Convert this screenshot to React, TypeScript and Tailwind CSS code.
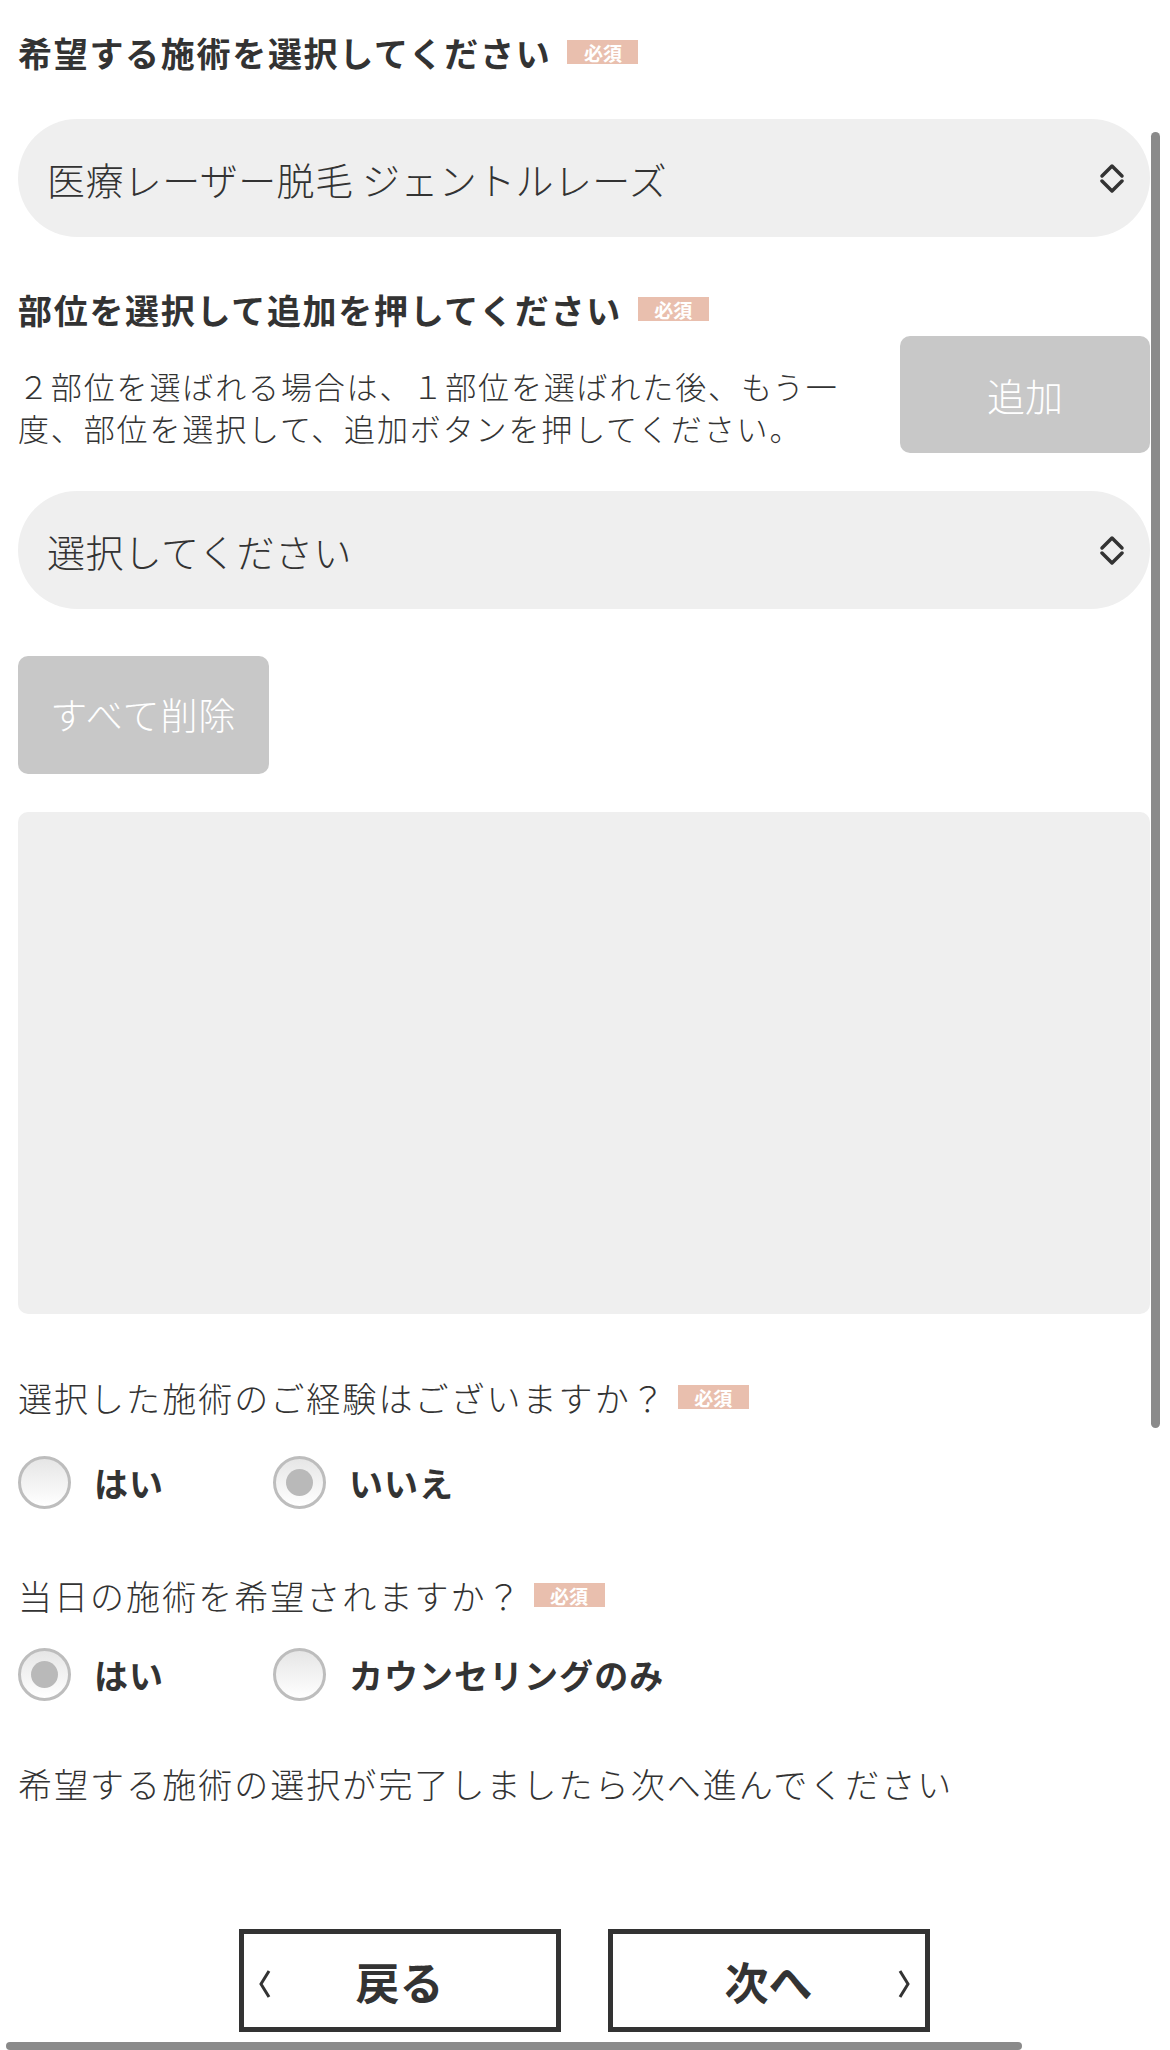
import React from "react"

function Badge({ gap = "ml-[16px]" }: { gap?: string }) {
    return (
        <span className={`${gap} inline-flex h-[24px] w-[71px] items-center justify-center bg-[#e9bfae] text-[19px] font-bold leading-none tracking-normal text-white`}>
            必須
        </span>
    )
}

function UpDown() {
    return (
        <svg width="26" height="30" viewBox="0 0 26 30" fill="none" stroke="#333" strokeWidth="3.5" strokeLinecap="round" strokeLinejoin="round">
            <polyline points="3,13 13,3 23,13" />
            <polyline points="3,18 13,28 23,18" />
        </svg>
    )
}

function SelectBox({ label }: { label: string }) {
    return (
        <div className="flex h-[118px] items-center justify-between rounded-full bg-[#efefef] pl-[29px] pr-[25px]">
            <span className="text-[38px] font-light tracking-[0.01em] text-[#333]">{label}</span>
            <UpDown />
        </div>
    )
}

function Radio({ checked, label }: { checked?: boolean; label: string }) {
    return (
        <label className="flex items-center gap-[23px]">
            <span className="flex h-[53px] w-[53px] items-center justify-center rounded-full border-[3px] border-[#bdbdbd] bg-gradient-to-b from-[#e6e6e6] to-white">
                {checked && <span className="h-[27px] w-[27px] rounded-full bg-[#b9b9b9]" />}
            </span>
            <span className="text-[34px] font-bold tracking-[0.03em] text-[#333]">{label}</span>
        </label>
    )
}

function Chevron({ dir }: { dir: "left" | "right" }) {
    return (
        <svg width="14" height="30" viewBox="0 0 14 30" fill="none" stroke="#333" strokeWidth="3" className="mt-[6px]">
            {dir === "left" ? <polyline points="11,2 3,15 11,28" /> : <polyline points="3,2 11,15 3,28" />}
        </svg>
    )
}

export default function App() {
    return (
        <div className="relative h-[2050px] w-[1170px] overflow-hidden bg-white text-[#333]" style={{ fontFamily: '"Noto Sans CJK JP", "Noto Sans", sans-serif' }}>
            <div className="pl-[18px] pr-[20px] pt-[28px]">
                <h2 className="flex h-[48px] items-center text-[34px] font-bold tracking-[0.05em]">
                    希望する施術を選択してください<Badge />
                </h2>

                <div className="mt-[43px]">
                    <SelectBox label="医療レーザー脱毛 ジェントルレーズ" />
                </div>

                <h2 className="mt-[48px] flex h-[48px] items-center text-[34px] font-bold tracking-[0.05em]">
                    部位を選択して追加を押してください<Badge />
                </h2>

                <div className="mt-[3px] flex items-start justify-between gap-[20px]">
                    <p className="mt-[29px] flex-1 text-[31px] font-light leading-[42px] tracking-[0.06em]">
                        ２部位を選ばれる場合は、１部位を選ばれた後、もう一度、部位を選択して、追加ボタンを押してください。
                    </p>
                    <button className="flex h-[117px] w-[250px] shrink-0 items-center justify-center rounded-[10px] bg-[#c8c8c8] text-[38px] font-light text-white">
                        追加
                    </button>
                </div>

                <div className="mt-[38px]">
                    <SelectBox label="選択してください" />
                </div>

                <button className="mt-[47px] flex h-[118px] w-[251px] items-center justify-center rounded-[10px] bg-[#c8c8c8] text-[37px] font-light tracking-[0.03em] text-white">
                    すべて削除
                </button>

                <div className="mt-[38px] h-[502px] rounded-[10px] bg-[#efefef]" />

                <p className="mt-[59px] flex h-[48px] items-center text-[34px] font-light tracking-[0.06em]">
                    選択した施術のご経験はございますか？<Badge gap="ml-[11px]" />
                </p>
                <div className="mt-[35px] flex items-center">
                    <div className="w-[255px]">
                        <Radio label="はい" />
                    </div>
                    <Radio checked label="いいえ" />
                </div>

                <p className="mt-[62px] flex h-[48px] items-center text-[34px] font-light tracking-[0.06em]">
                    当日の施術を希望されますか？<Badge gap="ml-[11px]" />
                </p>
                <div className="mt-[29px] flex items-center">
                    <div className="w-[255px]">
                        <Radio checked label="はい" />
                    </div>
                    <Radio label="カウンセリングのみ" />
                </div>

                <p className="mt-[58px] flex h-[48px] items-center text-[34px] font-light tracking-[0.06em]">
                    希望する施術の選択が完了しましたら次へ進んでください
                </p>

                <div className="mt-[122px] flex justify-center gap-[47px]">
                    <button className="flex h-[103px] w-[322px] items-center border-[5px] border-[#333] bg-white pl-[14px] pr-[28px]">
                        <Chevron dir="left" />
                        <span className="flex-1 text-center text-[44px] font-bold">戻る</span>
                    </button>
                    <button className="flex h-[103px] w-[322px] items-center border-[5px] border-[#333] bg-white pl-[28px] pr-[14px]">
                        <span className="flex-1 text-center text-[44px] font-bold">次へ</span>
                        <Chevron dir="right" />
                    </button>
                </div>
            </div>

            <div className="absolute right-[10px] top-[132px] h-[1296px] w-[9px] rounded-full bg-[#8a8a8a]" />
            <div className="absolute bottom-0 left-[6px] h-[8px] w-[1016px] rounded-full bg-[#8a8a8a]" />
        </div>
    )
}
